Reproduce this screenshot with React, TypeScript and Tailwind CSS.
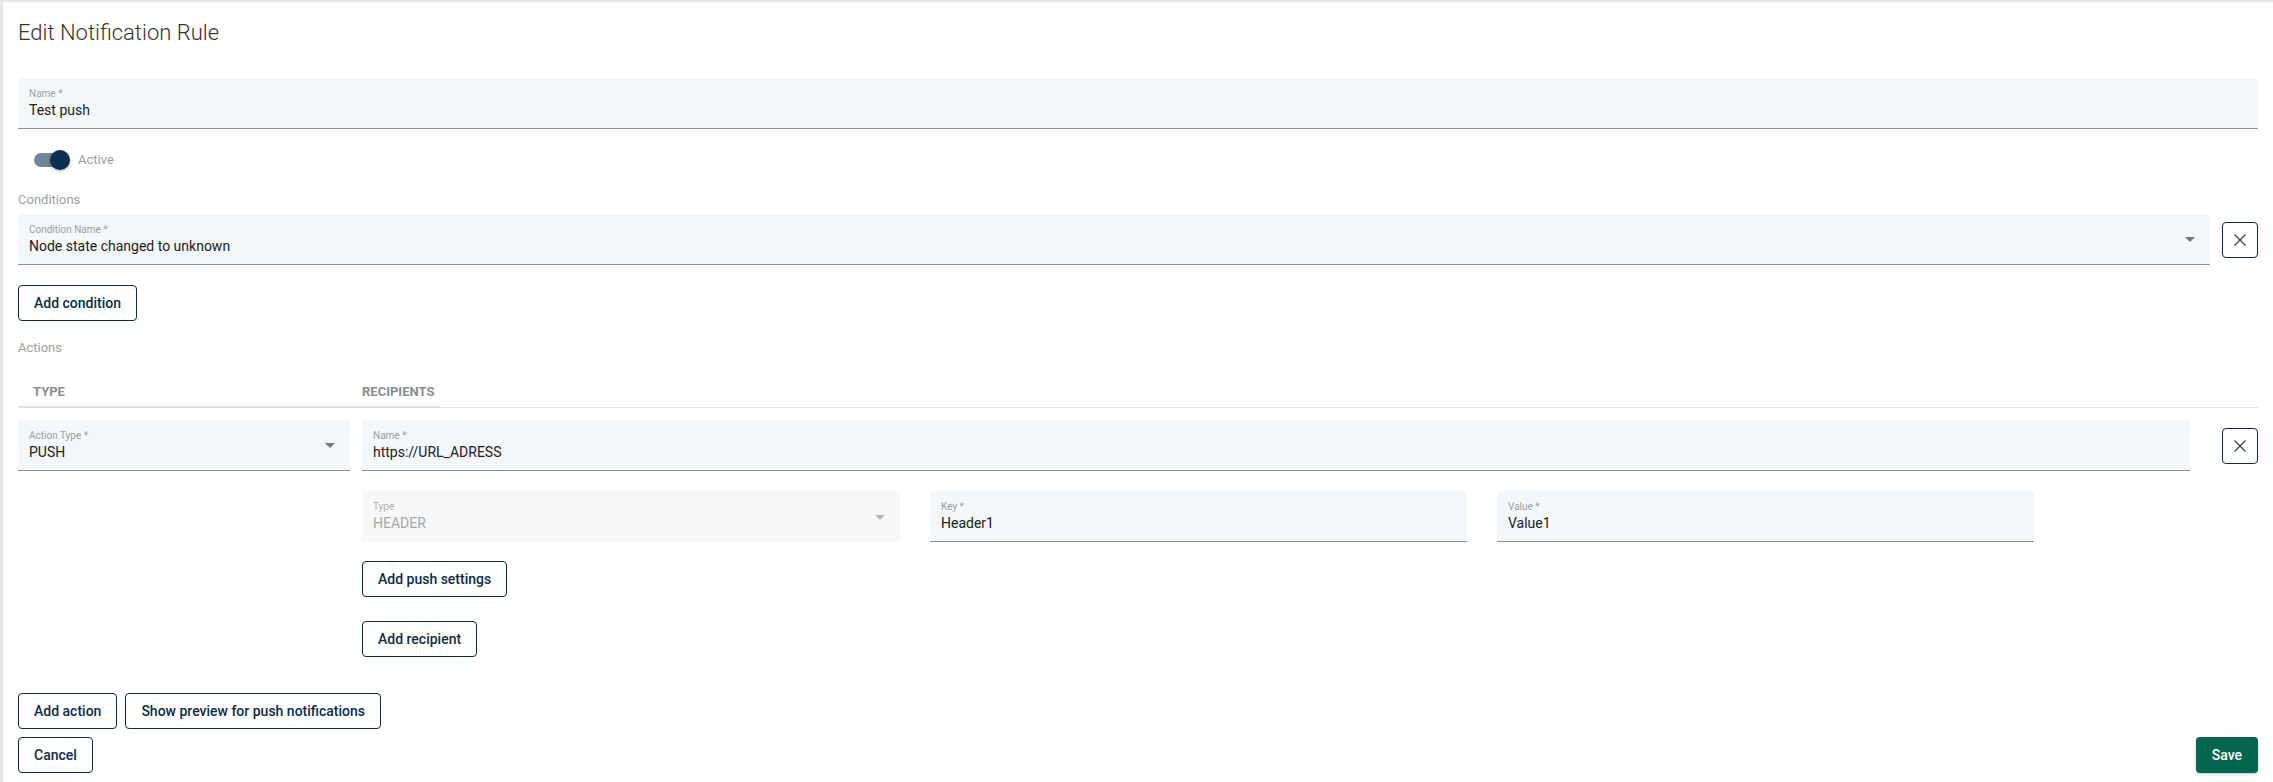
import React from "react";

const navyBtn =
  "flex h-[36px] items-center rounded-[4px] border border-[#0d2c48] bg-white px-[15px] text-[14px] font-medium leading-none text-[#0d2c48]";

function Caret({ muted }: { muted?: boolean }) {
  return (
    <svg
      viewBox="0 0 24 24"
      className={`absolute right-[8px] top-1/2 h-[24px] w-[24px] -translate-y-1/2 ${muted ? "fill-[#b5b5b5]" : "fill-[#757575]"}`}
    >
      <path d="M7 10l5 5 5-5z" />
    </svg>
  );
}

function Field({
  label,
  value,
  className = "",
  select,
  disabled,
}: {
  label: string;
  value: string;
  className?: string;
  select?: boolean;
  disabled?: boolean;
}) {
  return (
    <div
      className={`relative h-[51px] shrink-0 rounded-t-[4px] px-[11px] pt-[10px] ${
        disabled ? "rounded-b-[4px] bg-[#f7f7f7]" : "border-b border-[#8f8f8f] bg-[#f4f7f9]"
      } ${className}`}
    >
      <div className={`text-[10px] leading-[12px] ${disabled ? "text-[#b0b0b0]" : "text-[#9e9e9e]"}`}>{label}</div>
      <div className={`text-[14px] leading-[20px] ${disabled ? "text-[#a8a8a8]" : "text-[#212121]"}`}>{value}</div>
      {select && <Caret muted={disabled} />}
    </div>
  );
}

function RemoveButton({ className = "" }: { className?: string }) {
  return (
    <button
      className={`flex h-[36px] w-[36px] shrink-0 items-center justify-center rounded-[4px] border border-[#0d2c48] bg-white ${className}`}
    >
      <svg width="12" height="12" viewBox="0 0 12 12" className="stroke-[#3a3a3a]" strokeWidth="1.2">
        <path d="M0.5 0.5 11.5 11.5M11.5 0.5 0.5 11.5" />
      </svg>
    </button>
  );
}

export default function App() {
  return (
    <div className="min-h-screen bg-[#e6e6e6] pl-[3px] pt-[2px] font-[Roboto,sans-serif]">
      <div className="min-h-[780px] bg-white px-[15px] pb-4 pt-[19px]">
        <h1 className="h-[24px] text-[22px] font-light leading-[24px] text-[#333333]">
          Edit Notification Rule
        </h1>

        <Field label="Name *" value="Test push" className="mt-[33px] w-full" />

        <div className="mt-[19px] flex h-[24px] items-center pl-[16px]">
          <div className="relative h-[14px] w-[34px] rounded-full bg-[#6d8699]">
            <span className="absolute right-[-2px] top-[-3px] h-[20px] w-[20px] rounded-full bg-[#0b3152] shadow-[0_1px_3px_rgba(0,0,0,0.35)]" />
          </div>
          <span className="ml-[10px] text-[13px] text-[#9e9e9e]">Active</span>
        </div>

        <div className="mt-[18px] h-[20px] text-[13px] leading-[20px] text-[#9e9e9e]">Conditions</div>

        <div className="mt-[4px] flex items-center gap-[12px]">
          <Field label="Condition Name *" value="Node state changed to unknown" select className="flex-1" />
          <RemoveButton />
        </div>

        <div className="mt-[20px] flex">
          <button className={navyBtn}>Add condition</button>
        </div>

        <div className="mt-[17px] h-[20px] text-[13px] leading-[20px] text-[#9e9e9e]">Actions</div>

        <div className="mt-[20px] flex h-[30px] items-end">
          <div className="flex h-[30px] w-[422px] items-center border-b-2 border-[#dde1e6] text-[13px] font-bold text-[#8c8c8c]">
            <span className="w-[344px] pl-[15px]">TYPE</span>
            <span>RECIPIENTS</span>
          </div>
          <div className="flex-1 border-b border-[#e2e2e2]" />
        </div>

        <div className="mt-[12px] flex items-start">
          <Field label="Action Type *" value="PUSH" select className="w-[332px]" />
          <div className="ml-[12px] flex w-[1828px] flex-col items-start">
            <Field label="Name *" value="https://URL_ADRESS" className="w-full" />
            <div className="mt-[20px] flex gap-[30px]">
              <Field label="Type" value="HEADER" select disabled className="w-[538px]" />
              <Field label="Key *" value="Header1" className="w-[537px]" />
              <Field label="Value *" value="Value1" className="w-[537px]" />
            </div>
            <button className={`${navyBtn} mt-[19px]`}>Add push settings</button>
            <button className={`${navyBtn} mt-[24px]`}>Add recipient</button>
          </div>
          <RemoveButton className="ml-[32px] mt-[8px]" />
        </div>

        <div className="mt-[36px] flex gap-[8px]">
          <button className={navyBtn}>Add action</button>
          <button className={navyBtn}>Show preview for push notifications</button>
        </div>

        <div className="mt-[8px] flex items-center justify-between">
          <button className={navyBtn}>Cancel</button>
          <button className="flex h-[36px] items-center rounded-[4px] bg-[#05664f] px-4 text-[14px] font-medium leading-none text-white shadow-[0_1px_3px_rgba(0,0,0,0.25)]">
            Save
          </button>
        </div>
      </div>
    </div>
  );
}
